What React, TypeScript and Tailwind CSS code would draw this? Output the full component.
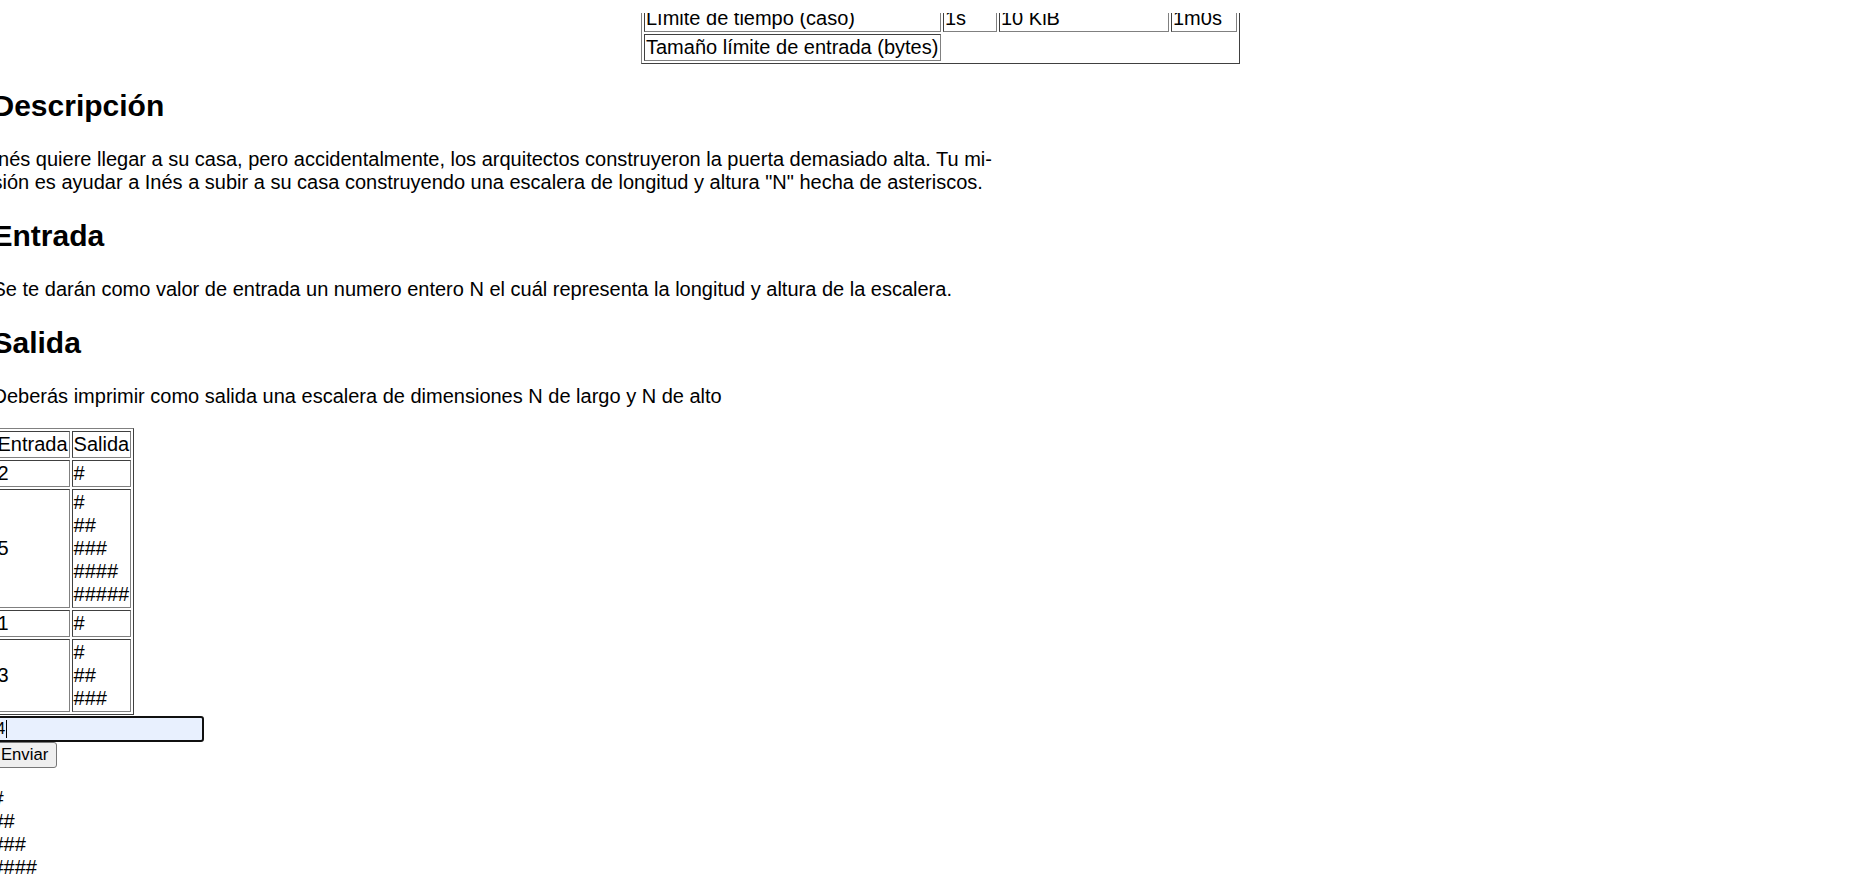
const cell = "border border-solid border-[#404040] border-r-[#808080] border-b-[#808080] p-[1px] align-middle text-left";
const outer = "border-separate border-spacing-[2px] border border-solid border-[#808080] border-r-[#404040] border-b-[#404040]";

const samples = [
  { input: "2", output: ["#"] },
  { input: "5", output: ["#", "##", "###", "####", "#####"] },
  { input: "1", output: ["#"] },
  { input: "3", output: ["#", "##", "###"] },
];

const result = ["#", "##", "###", "####"];

export default function App() {
  return (
    <div className="relative h-[881px] overflow-hidden bg-white text-black font-['Liberation_Sans',Arial,sans-serif] text-[20px] leading-[normal]">
      <div className="absolute inset-x-0 top-0 z-10 h-[13px] bg-white" />

      <div className="ml-[-7.5px] w-[1896px]">
        {/* limites */}
        <div className="flex justify-center pt-[2px]">
          <table className={outer}>
            <tbody>
              <tr>
                <td className={cell + " w-[297px]"}>Límite de tiempo (caso)</td>
                <td className={cell + " w-[54px]"}>1s</td>
                <td className={cell + " w-[170px]"}>10 KiB</td>
                <td className={cell + " w-[66px]"}>1m0s</td>
              </tr>
              <tr>
                <td className={cell}>Tamaño límite de entrada (bytes)</td>
              </tr>
            </tbody>
          </table>
        </div>

        <h2 className="mt-[25px] mb-[25px] text-[30px] font-bold leading-[normal]">Descripción</h2>
        <p className="my-[20px]">
          Inés quiere llegar a su casa, pero accidentalmente, los arquitectos construyeron la puerta demasiado alta. Tu mi-
          <br />
          sión es ayudar a Inés a subir a su casa construyendo una escalera de longitud y altura "N" hecha de asteriscos.
        </p>

        <h2 className="mt-[25px] mb-[25px] text-[30px] font-bold leading-[normal]">Entrada</h2>
        <p className="my-[20px]">
          Se te darán como valor de entrada un numero entero N el cuál representa la longitud y altura de la escalera.
        </p>

        <h2 className="mt-[25px] mb-[25px] text-[30px] font-bold leading-[normal]">Salida</h2>
        <p className="my-[20px]">Deberás imprimir como salida una escalera de dimensiones N de largo y N de alto</p>

        {/* ejemplos */}
        <table className={outer}>
          <tbody>
            <tr>
              <td className={cell}>Entrada</td>
              <td className={cell}>Salida</td>
            </tr>
            {samples.map((s, i) => (
              <tr key={i}>
                <td className={cell}>{s.input}</td>
                <td className={cell}>
                  {s.output.map((line, j) => (
                    <div key={j}>{line}</div>
                  ))}
                </td>
              </tr>
            ))}
          </tbody>
        </table>

        <div className="mt-[1px] flex h-[26px] w-[211px] items-center rounded-[3px] border-2 border-solid border-[#101010] bg-[#E8F0FE] pl-[1.5px] text-[16.6667px]">
          <span>4</span>
          <span className="ml-[0.5px] h-[18px] w-px bg-black" />
        </div>
        <button className="block h-[26px] rounded-[3px] border border-solid border-[#767676] bg-[#EFEFEF] px-[7.5px] text-[16.6667px] leading-[normal] text-black">
          Enviar
        </button>

        <div className="mt-[19px]">
          {result.map((line, i) => (
            <div key={i}>{line}</div>
          ))}
        </div>
      </div>
    </div>
  );
}
